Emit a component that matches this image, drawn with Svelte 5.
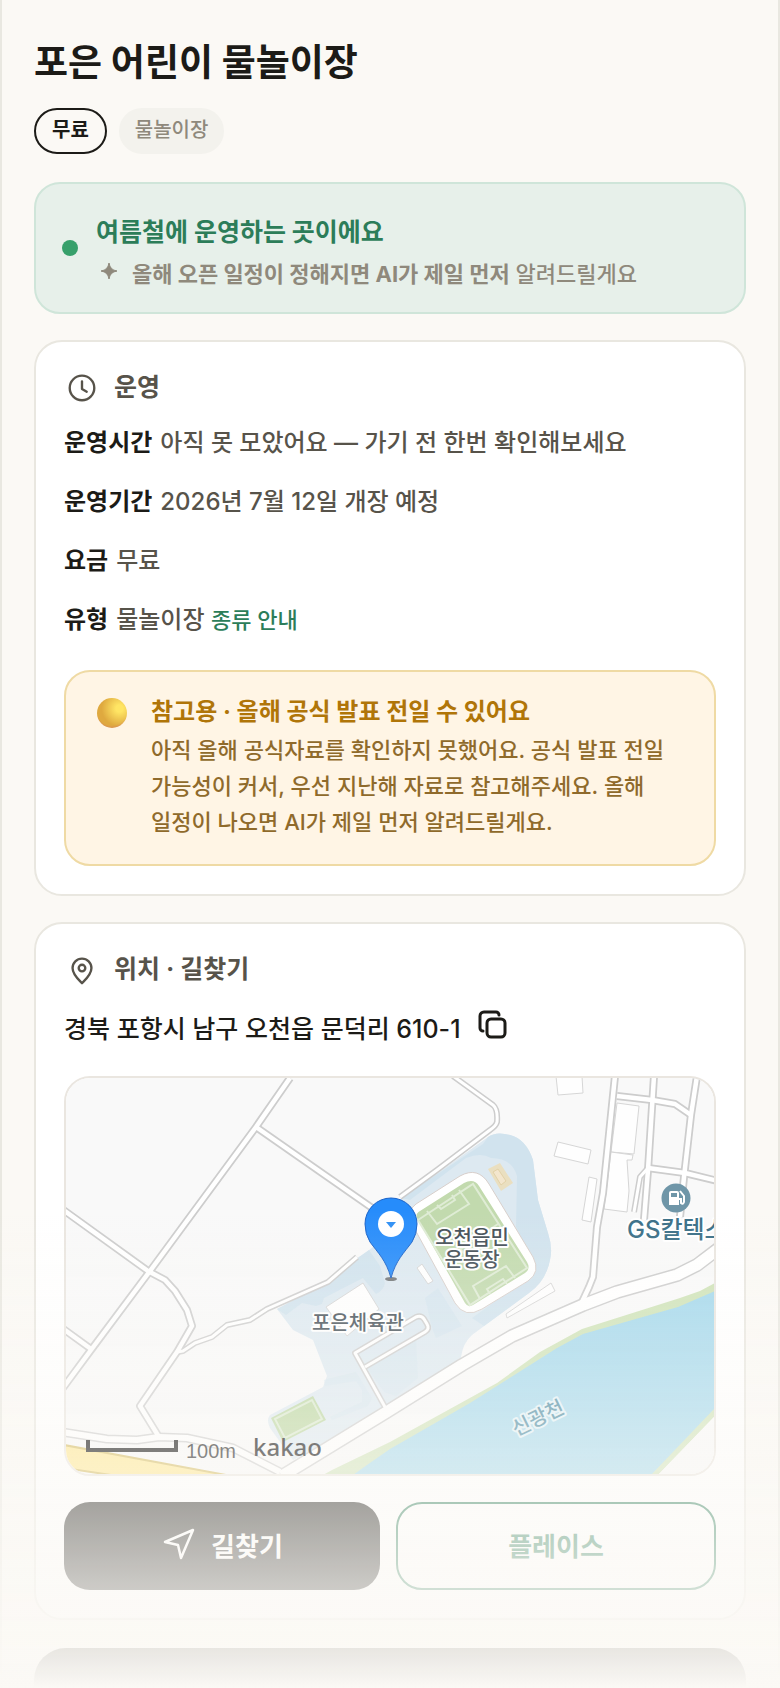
<script>
    const place = {
        name: "포은 어린이 물놀이장",
        tags: ["무료", "물놀이장"],
        address: "경북 포항시 남구 오천읍 문덕리 610-1",
    };

    const rows = [
        { label: "운영시간", value: "아직 못 모았어요 — 가기 전 한번 확인해보세요" },
        { label: "운영기간", value: "2026년 7월 12일 개장 예정" },
        { label: "요금", value: "무료" },
        { label: "유형", value: "물놀이장", link: "종류 안내" },
    ];

    // narrow streets, drawn twice: grey casing first, white surface on top
    const streets = [
        "M224 0 L190 49 L84 193 L25 272 L-6 314",
        "M190 49 L309 132",
        "M-4 131 L82 193 L99 202 L109 213 L121 232 L126 248 L111 274 L74 328 L93 359",
        "M-4 250 L25 271",
        "M549 -2 L537 115 L531 149 L527 199 L523 209 L516 224",
        "M588 -2 L582 92 L578 142",
        "M631 -2 L625 37 L618 99 L614 139",
        "M551 18 L586 22 L609 26 L625 37",
        "M582 90 L619 95 L652 103",
    ];
    const lanes = [
        "M387 -2 L427 27 Q432 31 431 44 Q430 48 424 52 L371 92 L334 119",
        "M111 274 L117 273 L129 265 L146 259 L161 247 L184 242 L201 231 L262 204 L291 179",
        "M582 90 L574 99 L568 134",
        "M319 329 L289 275 L350 239 Q355 237 358 241 L361 246 Q364 251 359 254 L299 289",
    ];
    const mainRoad =
        "M216 398 L319 335 L396 287 L446 258 L517 227 L551 214 L611 197 L631 187 L656 168";
    const lowerRoad = "M-4 354 L41 361 L71 362 L93 359 L121 360 L167 370 L214 394";

    const buildings = [
        "490,-2 516,-2 517,15 492,17",
        "492,64 525,72 522,86 488,78",
        "523,99 531,101 525,144 516,142",
        "551,25 573,28 568,76 545,74",
        "545,74 567,77 566,82 561,82 563,113 561,134 538,131",
        "485,205 489,213 441,240 440,236",
        "356,186 367,203 362,206 351,190",
        "297,205 313,231 281,258 260,229",
    ];

    function copyAddress() {
        navigator.clipboard?.writeText(place.address);
    }
</script>

<div class="page">
    <header class="place-header">
        <h1>{place.name}</h1>
        <div class="tags">
            {#each place.tags as tag, i}
                <span class="tag" class:outlined={i === 0}>{tag}</span>
            {/each}
        </div>
    </header>

    <section class="status">
        <span class="status-dot"></span>
        <div class="status-body">
            <p class="status-title">여름철에 운영하는 곳이에요</p>
            <p class="status-sub">
                <svg class="sparkle" viewBox="0 0 24 24" aria-hidden="true">
                    <path d="M13 4 Q14 11 21 12 Q14 13 13 20 Q12 13 5 12 Q12 11 13 4Z" />
                </svg>
                <span><strong>올해 오픈 일정이 정해지면 AI가 제일 먼저</strong> 알려드릴게요</span>
            </p>
        </div>
    </section>

    <section class="card">
        <h2>
            <svg class="icon" viewBox="0 0 36 36" aria-hidden="true">
                <circle cx="18" cy="19" r="13" />
                <path d="M18 12v8l5 3" />
            </svg>
            운영
        </h2>
        <dl class="rows">
            {#each rows as row}
                <div class="row">
                    <dt>{row.label}</dt>
                    <dd>
                        {row.value}
                        {#if row.link}
                            <a href="#types">{row.link}</a>
                        {/if}
                    </dd>
                </div>
            {/each}
        </dl>
        <div class="notice">
            <span class="orb"></span>
            <div>
                <h3>참고용 · 올해 공식 발표 전일 수 있어요</h3>
                <p>
                    아직 올해 공식자료를 확인하지 못했어요. 공식 발표 전일 가능성이 커서, 우선
                    지난해 자료로 참고해주세요. 올해 일정이 나오면 AI가 제일 먼저 알려드릴게요.
                </p>
            </div>
        </div>
    </section>

    <section class="card location">
        <h2>
            <svg class="icon" viewBox="0 0 36 36" aria-hidden="true">
                <path d="M18 33c-4-4-10-9-10-16a10 10 0 0 1 20 0c0 7-6 12-10 16z" />
                <circle cx="18" cy="17" r="3.5" />
            </svg>
            위치 · 길찾기
        </h2>
        <div class="address">
            <span>{place.address}</span>
            <button class="copy" type="button" aria-label="주소 복사" on:click={copyAddress}>
                <svg viewBox="0 0 32 32" aria-hidden="true">
                    <rect x="10" y="10" width="18" height="18" rx="4" />
                    <path d="M6 22a3 3 0 0 1-3-3V7a4 4 0 0 1 4-4h12a3 3 0 0 1 3 3" />
                </svg>
            </button>
        </div>

        <div class="map">
            <svg viewBox="0 0 648 396" preserveAspectRatio="xMidYMid slice" role="img" aria-label="지도">
                <rect width="648" height="396" fill="#f9f9f9" />

                <!-- sports park -->
                <path
                    fill="#dde9f1"
                    d="M211 231 L227 252 L247 262 L261 298 L257 309 L204 337 Q200 342 204 350 L227 382 L319 334 L395 285 L395 279 Q397 265 406 257 L463 215 Q480 203 484 182 Q487 170 482 155 L472 122 L467 82 Q460 61 444 57 Q430 53 422 59 L324 129 L307 169 L262 204 Z"
                />
                <g fill="#d1e3ee">
                    <path d="M417 66 L422 59 Q430 53 444 57 Q460 61 467 82 L472 122 L482 155 Q487 170 484 182 Q480 203 463 215 L418 248 L406 240 L455 205 L470 190 L450 149 L451 98 Q446 80 425 80 Q415 74 400 80 L344 122 L335 120 Z" />
                    <path d="M211 231 L262 204 L290 181 L303 172 L314 188 L319 205 Q318 212 310 216 L297 200 L258 220 L256 226 L250 228 L236 225 L220 237 Z" />
                    <path d="M359 220 L372 210 L396 248 L370 260 L366 250 Z" opacity="0.6" />
                    <path d="M301 290 L350 262 L352 300 L330 318 L318 314 Z" opacity="0.5" />
                    <path d="M258 302 L290 294 L306 320 L302 328 L266 342 L264 339 L296 324 L296 312 L290 303 L259 308 Z" opacity="0.5" />
                </g>
                <polygon points="205,340 247,318 260,342 217,364" fill="#b9d59d" />
                <polygon points="209,341 246,322 256,341 219,360" fill="none" stroke="#d9e9cd" stroke-width="2" />

                <!-- river with green banks -->
                <path
                    fill="#cfe3b8"
                    d="M649 205 L634 213 L614 220 L516 251 L474 274 L431 305 L324 364 L266 392 L257 397 L592 397 L649 338 Z"
                />
                <path
                    fill="#a4d8ec"
                    d="M649 213 L612 229 L517 256 L491 270 L404 325 L324 371 L301 387 L287 397 L585 397 L649 330 Z"
                />
                <polygon points="649,338 592,397 649,397" fill="#f9f9f9" />

                <path d="M-2 367 L160 397 L45 397 L-2 390 Z" fill="#ffe78c" stroke="#d3b95a" stroke-width="2" />

                <g fill="#fefefe" stroke="#d6d6d6">
                    {#each buildings as points}
                        <polygon {points} />
                    {/each}
                </g>

                <g fill="none" stroke="#cdcdcd" stroke-linejoin="round">
                    {#each streets as d}<path {d} stroke-width="8" />{/each}
                    {#each lanes as d}<path {d} stroke-width="6" />{/each}
                    <path d={lowerRoad} stroke-width="9" />
                    <path d={mainRoad} stroke-width="14" />
                </g>
                <g fill="none" stroke="#fff" stroke-linejoin="round">
                    {#each streets as d}<path {d} stroke-width="4.5" />{/each}
                    {#each lanes as d}<path {d} stroke-width="3" />{/each}
                    <path d={lowerRoad} stroke-width="6" />
                    <path d={mainRoad} stroke-width="11" />
                </g>

                <!-- stadium -->
                <path
                    fill="#fff"
                    stroke="#d8cfcb"
                    d="M346 146 Q339 134 350 126 L394 98 Q412 88 423 106 L467 179 Q475 194 462 203 L416 231 Q399 241 389 225 Z"
                />
                <path
                    fill="#c2daae"
                    d="M351 140 Q349 136 354 133 L398 105 Q408 100 413 108 L461 184 Q465 191 459 195 L407 227 Q402 230 399 225 Z"
                />
                <g fill="none" stroke="#dfecd5" stroke-width="2">
                    <path d="M352 142 L407 106 L461 190 L404 227 Z" />
                    <path d="M361 133 L371 146 L403 126 L393 112 M371 127 L375 131 L389 122 L386 117" />
                    <path d="M414 221 L407 208 L440 188 L449 200 M424 216 L421 211 L437 201 L441 206" />
                    <path d="M377 183 L432 146" />
                </g>
                <circle cx="405" cy="165" r="12" fill="none" stroke="#dfecd5" stroke-width="2" />
                <polygon points="434,85 447,105 435,113 422,91" fill="#eadfc0" />
                <polygon points="432,91 440,103 435,107 427,94" fill="#f3e6cd" stroke="#e2d2a8" />

                <!-- gas station -->
                <circle cx="610" cy="120" r="14.5" fill="#6f96a8" />
                <path fill="#fff" d="M603 115 a2 2 0 0 1 2-2 h6 a2 2 0 0 1 2 2 v12 h-10 z" />
                <rect x="605" y="115" width="6" height="4" fill="#6f96a8" />
                <path d="M613 121 h2 v4 q2 2 3-1 v-6 l-4-5" fill="none" stroke="#fff" stroke-width="2" />

                <g class="labels">
                    <text x="406" y="167">오천읍민</text>
                    <text x="406" y="189">운동장</text>
                    <text x="292" y="252">포은체육관</text>
                    <text class="station" x="561" y="160">GS칼텍스</text>
                    <text class="river" x="472" y="347" transform="rotate(-26 472 340)">신광천</text>
                </g>

                <!-- marker -->
                <ellipse cx="325" cy="201" rx="6" ry="2" fill="#444" opacity="0.7" />
                <path
                    fill="#268cfb"
                    stroke="#1a62c8"
                    d="M325 200 C320 182 312 175 304 164 Q299 156 299 146 A26 26 0 0 1 351 146 Q351 156 346 164 C338 175 330 182 325 200 Z"
                />
                <circle cx="325" cy="146" r="13" fill="#fff" />
                <path d="M320 144 h10 l-5 6 z" fill="#2f90f5" />

                <path d="M22 362 v10 h88 v-10" fill="none" stroke="#000" stroke-width="4" />
                <text class="scale" x="120" y="380">100m</text>
                <text class="brand" x="187" y="378">kakao</text>
            </svg>
        </div>

        <div class="actions">
            <button class="primary" type="button">
                <svg viewBox="0 0 36 36" aria-hidden="true">
                    <path d="M4 16 L32 4 L20 32 L17 19 Z" />
                </svg>
                길찾기
            </button>
            <button class="secondary" type="button">플레이스</button>
        </div>
    </section>

    <div class="next-panel"></div>
    <div class="fade"></div>
</div>

<style>
    :global(body) {
        background: #fbf9f5;
    }

    .page {
        box-sizing: border-box;
        min-height: 100vh;
        display: flex;
        flex-direction: column;
        padding: 36px 32px 0;
        border: solid #e9e8e1;
        border-width: 0 2px;
        background: #fbf9f5;
        color: #1c1b17;
        font-family: Inter, "Noto Sans CJK KR", sans-serif;
        font-size: 25px;
        font-weight: 500;
        word-break: keep-all;
    }

    h1,
    h2,
    h3,
    p,
    dl,
    dd {
        margin: 0;
    }

    button {
        font-family: inherit;
        cursor: pointer;
    }

    h1 {
        font-size: 37px;
        line-height: 54px;
        font-weight: 700;
    }

    .tags {
        display: flex;
        gap: 12px;
        margin: 18px 0 28px;
    }

    .tag {
        box-sizing: border-box;
        height: 46px;
        padding: 0 14px;
        border: 2px solid #f3f2ed;
        border-radius: 23px;
        background: #f3f2ed;
        color: #8f897c;
        font-size: 20px;
        line-height: 40px;
    }

    .tag.outlined {
        border-color: #1c1b17;
        background: transparent;
        color: #1c1b17;
        font-weight: 700;
        padding: 0 16px;
    }

    .status {
        display: flex;
        align-items: center;
        gap: 18px;
        padding: 17px 26px;
        border: 2px solid #cfe5d9;
        border-radius: 26px;
        background: #e7f0ea;
    }

    .status-dot {
        flex: none;
        width: 16px;
        height: 16px;
        border-radius: 50%;
        background: #37a06b;
    }

    .status-body {
        padding-top: 10px;
        line-height: 42px;
    }

    .status-title {
        color: #2c7d59;
        font-weight: 700;
    }

    .status-sub {
        display: flex;
        align-items: center;
        gap: 12px;
        color: #8f897c;
        font-size: 22px;
    }

    .sparkle {
        flex: none;
        width: 24px;
        height: 24px;
        margin-bottom: 6px;
        fill: #8f897c;
        stroke: #8f897c;
        stroke-linejoin: round;
    }

    .card {
        margin-top: 26px;
        padding: 28px;
        border: 2px solid #e9e7e0;
        border-radius: 28px;
        background: #fff;
    }

    h2 {
        display: flex;
        align-items: center;
        gap: 14px;
        margin-bottom: 21px;
        color: #57534a;
        font-size: 25px;
        line-height: 34px;
        font-weight: 700;
    }

    .icon {
        width: 36px;
        height: 34px;
        fill: none;
        stroke: #57534a;
        stroke-width: 2.5;
        stroke-linecap: round;
        stroke-linejoin: round;
    }

    .rows {
        display: flex;
        flex-direction: column;
        gap: 23px;
        font-size: 24px;
        line-height: 36px;
    }

    .row {
        display: flex;
        gap: 8px;
    }

    dt {
        font-weight: 700;
    }

    dd {
        color: #57534a;
    }

    dd a {
        color: #2c7d59;
        font-size: 22px;
        text-decoration: none;
    }

    .notice {
        display: flex;
        gap: 24px;
        margin-top: 32px;
        padding: 20px 32px 24px 31px;
        border: 2px solid #efdaa4;
        border-radius: 26px;
        background: #fff5e5;
        color: #8f6a2b;
        font-size: 22px;
        line-height: 36px;
    }

    .notice h3 {
        color: #b07508;
        font-size: 24px;
        line-height: 40px;
    }

    .orb {
        flex: none;
        width: 30px;
        height: 30px;
        margin-top: 6px;
        border-radius: 50%;
        background:
            radial-gradient(circle at 75% 35%, #ffe564 12%, rgba(255, 225, 90, 0) 60%),
            radial-gradient(circle at 50% 40%, #dfa93f 65%, #d6845c 85%);
    }

    .address {
        display: flex;
        align-items: center;
        gap: 16px;
        margin-bottom: 25px;
        line-height: 44px;
    }

    .copy {
        display: flex;
        padding: 0 0 8px;
        border: 0;
        background: none;
    }

    .copy svg {
        width: 32px;
        height: 32px;
        fill: none;
        stroke: #1c1b17;
        stroke-width: 3;
        stroke-linecap: round;
    }

    .map {
        overflow: hidden;
        border: 2px solid #eae6e0;
        border-radius: 26px;
    }

    .map svg {
        display: block;
        width: 100%;
    }

    .labels text {
        fill: #434e56;
        stroke: #fff;
        stroke-width: 4px;
        stroke-linejoin: round;
        paint-order: stroke;
        font-size: 20px;
        font-weight: 500;
        text-anchor: middle;
    }

    .labels .station {
        fill: #3a6f87;
        font-size: 24px;
        text-anchor: start;
    }

    .labels .river {
        fill: #4a8aa2;
        stroke: #e2f2f8;
    }

    .scale {
        font-family: "Liberation Sans", sans-serif;
        font-size: 20px;
        font-weight: 400;
        fill: #111;
    }

    .brand {
        font-family: "Noto Sans", sans-serif;
        font-size: 24px;
        font-weight: 500;
        fill: #000;
    }

    .actions {
        display: grid;
        grid-template-columns: 79fr 80fr;
        gap: 16px;
        margin-top: 26px;
    }

    .actions button {
        display: flex;
        align-items: center;
        justify-content: center;
        gap: 14px;
        height: 88px;
        padding: 0 0 4px;
        border-radius: 26px;
        font-size: 26px;
        font-weight: 700;
    }

    .actions svg {
        width: 36px;
        height: 36px;
        fill: none;
        stroke: #fff;
        stroke-width: 2.5;
        stroke-linejoin: round;
    }

    .primary {
        border: 0;
        background: #1c1b17;
        color: #fff;
    }

    .secondary {
        border: 2px solid #2c7d59;
        background: #fff;
        color: #2c7d59;
    }

    .next-panel {
        flex: 1;
        min-height: 36px;
        margin-top: 28px;
        border-radius: 32px 32px 0 0;
        background: #1c1b17;
    }

    .fade {
        position: fixed;
        right: 0;
        bottom: 0;
        left: 0;
        height: 480px;
        background: linear-gradient(to bottom, rgba(251, 249, 245, 0), #fbf9f5);
        pointer-events: none;
    }
</style>
